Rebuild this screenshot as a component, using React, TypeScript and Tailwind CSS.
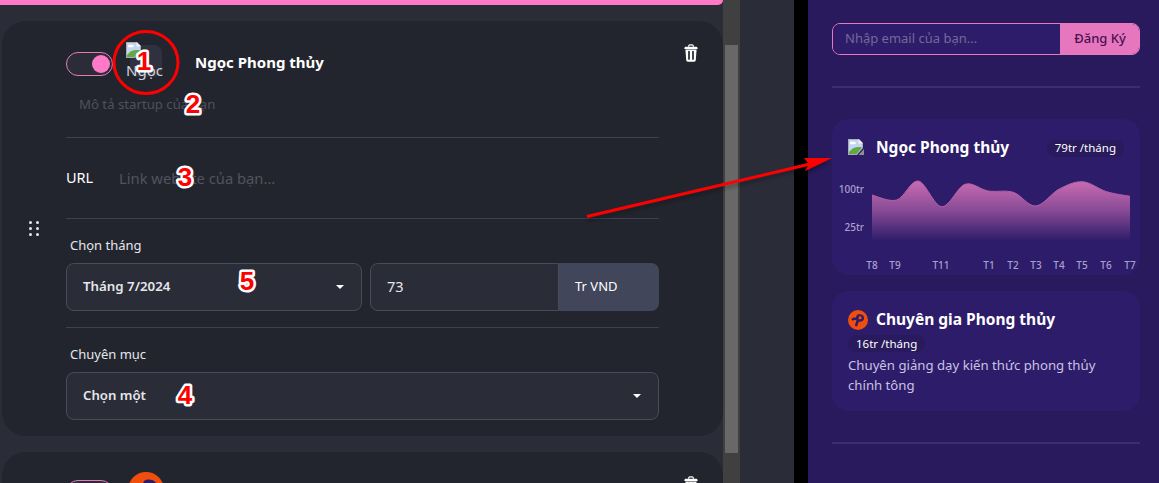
import React from "react"

const TrashIcon = ({ className }: { className?: string }) => (
  <svg viewBox="0 0 14 18" className={className} fill="none">
    <path d="M4.600 2.800V2a1.400 1.400 0 0 1 1.400-1.200h2A1.400 1.400 0 0 1 9.400 2v.8" stroke="white" strokeWidth="1.200" />
    <path d="M.4 4.200c0-.9.6-1.500 1.500-1.500h10.200c.9 0 1.500.6 1.500 1.500v.8H.4z" fill="white" />
    <path d="M1.400 5.400h11.200L11.800 16c-.1 1-.7 1.700-1.600 1.700H3.800c-.9 0-1.500-.7-1.600-1.700z" fill="white" />
    <path d="M5 7.500v7.500M9 7.500v7.500" stroke="#23252e" strokeWidth="1.700" strokeLinecap="round" />
  </svg>
)

const BrokenImage = ({ className }: { className?: string }) => (
  <svg viewBox="0 0 16 16" className={className}>
    <path d="M0 0h11l4 4v5l-6 7H0z" fill="#a9adb3" />
    <path d="M1 1h9.500L14 4.500V9l-5.500 6H1z" fill="#c5d6f2" />
    <path d="M2 3.500c1-1.300 3-1.300 4-.5 1 0 2 .5 2 1.500-2 1-4 1-6 .5z" fill="#ffffff" />
    <path d="M1 14.500V13c3-4 8-6 13-4.500L8.500 15H1z" fill="#62a845" />
    <path d="M10.500 0v4.500H15z" fill="#eef1f5" />
    <path d="M16 10v6h-5.500z" fill="#8b8f96" />
  </svg>
)

const Logo = ({ className }: { className?: string }) => (
  <svg viewBox="0 0 20 20" className={className}>
    <circle cx="10" cy="10" r="10" fill="#f04e0c" />
    <path
      d="M3.500 9.500c.6-1.800 2.400-2.300 4.300-1.800l.9-2.200c.3-.8 1.200-1.300 2.100-1.300 2.600-.2 5.100.9 5.300 3.500.2 2.700-2.600 4.500-5.300 4.100L9.400 15.500c-.3 1-1.400 1.300-2 .6-.5-.5-.4-1.200-.1-2l1.200-3.800c-1.800-.8-3.300 0-4.200.2-.5-.1-.9-.4-.8-1z"
      fill="#2d1c69"
    />
    <path d="M11 6.400c1.500-.4 2.700.2 2.700 1.300 0 1.100-1.300 1.800-3.300 1.500z" fill="#f04e0c" />
  </svg>
)

const Caret = () => (
  <span className="w-0 h-0 border-x-[4px] border-x-transparent border-t-[4px] border-t-white" />
)

const Toggle = () => (
  <div className="flex items-center justify-end w-[47px] h-[24px] rounded-full border border-[#e879c0] bg-[#2a2c38] pr-[2px]">
    <span className="w-[18px] h-[18px] rounded-full bg-[#ff7ac6]" />
  </div>
)

const DragHandle = () => (
  <div className="grid grid-cols-2 gap-x-[5px] gap-y-[3px] w-[10px]">
    {[0, 1, 2, 3, 4, 5].map((i) => (
      <span key={i} className="w-[3px] h-[3px] rounded-full bg-[#e5e7eb]" />
    ))}
  </div>
)

const Badge = ({ children }: { children: React.ReactNode }) => (
  <span className="inline-flex items-center h-[17px] px-2 rounded-full bg-[#281a5c] text-white text-[11.500px] leading-none">
    {children}
  </span>
)

const series = [
  [872, 195], [896.7, 200], [918.3, 181], [941.7, 206.7], [965, 184.3], [988.3, 191],
  [1013.3, 192.3], [1035.7, 206], [1059.3, 189], [1082.7, 181.7], [1106.7, 191.7], [1130, 196.3],
]

// catmull-rom through the points
function smoothLine(p: number[][]) {
  let d = `M${p[0][0]} ${p[0][1]}`
  for (let i = 0; i < p.length - 1; i++) {
    const a = p[i - 1] || p[i]
    const b = p[i]
    const c = p[i + 1]
    const e = p[i + 2] || c
    d += ` C${b[0] + (c[0] - a[0]) / 6} ${b[1] + (c[1] - a[1]) / 6} ${c[0] - (e[0] - b[0]) / 6} ${c[1] - (e[1] - b[1]) / 6} ${c[0]} ${c[1]}`
  }
  return d
}

const months = [
  ["T8", 872], ["T9", 895], ["T11", 941], ["T1", 989], ["T2", 1013],
  ["T3", 1036], ["T4", 1059], ["T5", 1082], ["T6", 1106], ["T7", 1130],
] as const

// viewBox follows the page coordinates of the chart area
const Chart = () => {
  const line = smoothLine(series)
  return (
    <svg viewBox="832 170 308 105" className="w-[308px] h-[105px]">
      <defs>
        <linearGradient id="area" gradientUnits="userSpaceOnUse" x1="0" y1="180" x2="0" y2="241">
          <stop offset="0%" stopColor="#cb6db3" />
          <stop offset="50%" stopColor="#884a96" />
          <stop offset="100%" stopColor="#2d1c69" />
        </linearGradient>
      </defs>
      <path d={`${line} L1130 242 L872 242 Z`} fill="url(#area)" />
      <path d={line} fill="none" stroke="#b55fa6" strokeWidth="1" />
      <text x="864" y="193" textAnchor="end" fontSize="10" fontWeight="500" fill="#aaa0d0">100tr</text>
      <text x="864" y="231" textAnchor="end" fontSize="10" fontWeight="500" fill="#aaa0d0">25tr</text>
      {months.map(([label, x]) => (
        <text key={label} x={x} y="269" textAnchor="middle" fontSize="10" fontWeight="500" fill="#aaa0d0">{label}</text>
      ))}
    </svg>
  )
}

const Annotations = () => (
  <svg className="absolute inset-0 pointer-events-none" width="1159" height="483">
    <defs>
      <filter id="soft" x="-10%" y="-50%" width="120%" height="200%">
        <feDropShadow dx="0" dy="3" stdDeviation="2" floodColor="#000" floodOpacity="0.35" />
      </filter>
    </defs>
    <ellipse cx="146" cy="62.500" rx="32" ry="31" fill="none" stroke="#f00" strokeWidth="3" />
    <g filter="url(#soft)">
      <path d="M587 216.500L810 164" stroke="#f00" strokeWidth="3" />
      <path d="M832 158L805 171L809 164L804 158Z" fill="#f00" />
    </g>
    {[
      ["1", 144, 70],
      ["2", 193, 113],
      ["3", 185, 186],
      ["5", 247, 290],
      ["4", 185, 404],
    ].map(([n, x, y]) => (
      <text
        key={n}
        x={x}
        y={y}
        textAnchor="middle"
        fontSize="26"
        fontWeight="700"
        fill="#f00"
        stroke="#fff"
        strokeWidth="5"
        strokeLinejoin="round"
        paintOrder="stroke"
        style={{ fontFamily: '"Liberation Sans", sans-serif' }}
      >
        {n}
      </text>
    ))}
  </svg>
)

export default function App() {
  return (
    <div className="relative flex w-[1159px] h-[483px] overflow-hidden bg-black font-['Noto_Sans',sans-serif]">
      {/* form column */}
      <div className="w-[723px] shrink-0 bg-[#2a2c38] overflow-hidden">
        <div className="h-[5px] rounded-br-lg bg-[#ff7ac6]" />
        <div className="flex flex-col gap-4 mt-4 ml-[2px]">
          <section className="flex items-center h-[415px] rounded-3xl bg-[#23252e]">
            <div className="flex justify-center w-[64px] shrink-0 pr-[1px]">
              <DragHandle />
            </div>
            <div className="flex flex-col flex-1 min-w-0 h-full">
              <div className="flex items-start h-[117px] border-b border-[#3f404f]">
                <div className="flex-1">
                  <div className="flex items-center mt-6">
                    <div className="mt-[5px]">
                      <Toggle />
                    </div>
                    <div className="relative w-[32px] h-[32px] ml-[17px] rounded-lg bg-[#2f3140]">
                      <BrokenImage className="absolute -left-[4px] -top-[3px] w-[16px] h-[16px]" />
                      <span className="absolute -left-[4px] top-[15px] text-[15px] text-[#d1d5db] leading-5">Ngọc</span>
                    </div>
                    <h2 className="ml-[33px] text-[15px] font-bold text-white mt-[2px]">Ngọc Phong thủy</h2>
                  </div>
                  <p className="mt-[17px] pl-[13px] text-[13.200px] leading-5 text-[#4f505e]">Mô tả startup của bạn</p>
                </div>
              </div>
              <div className="flex items-center h-[81px] border-b border-[#3f404f]">
                <span className="w-[53px] text-[14.500px] text-white">URL</span>
                <span className="text-[14.750px] text-[#52535f]">Link website của bạn...</span>
              </div>
              <div className="pt-[16px] h-[109px] border-b border-[#3f404f]">
                <label className="block pl-1 text-[13px] leading-5 text-[#e5e7eb]">Chọn tháng</label>
                <div className="flex gap-2 mt-2">
                  <div className="flex items-center justify-between w-[296px] h-[48px] pl-4 pr-[17px] rounded-lg border border-[#494b58] bg-[#2a2c38]">
                    <span className="text-[13.300px] font-semibold text-[#e5e7eb]">Tháng 7/2024</span>
                    <Caret />
                  </div>
                  <div className="flex flex-1 h-[48px]">
                    <div className="flex items-center flex-1 pl-4 rounded-l-lg border border-[#494b58] bg-[#2a2c38] text-[14.500px] text-[#e5e7eb]">73</div>
                    <div className="flex items-center w-[100px] pl-4 rounded-r-lg bg-[#41465a] text-[13px] text-white">Tr VND</div>
                  </div>
                </div>
              </div>
              <div className="pt-[16px]">
                <label className="block pl-1 text-[13px] leading-5 text-[#e5e7eb]">Chuyên mục</label>
                <div className="flex items-center justify-between h-[48px] mt-2 pl-4 pr-[17px] rounded-lg border border-[#494b58] bg-[#2a2c38]">
                  <span className="text-[13.200px] font-semibold text-[#e5e7eb]">Chọn một</span>
                  <Caret />
                </div>
              </div>
            </div>
            <div className="self-start w-[64px] shrink-0 pt-[23px] pl-[25px]">
              <TrashIcon className="w-[14px] h-[18px]" />
            </div>
          </section>
          <section className="flex h-[120px] rounded-3xl bg-[#23252e]">
            <div className="w-[64px] shrink-0" />
            <div className="flex flex-1 items-start pt-[20px]">
              <div className="mt-[8px]">
                <Toggle />
              </div>
              <Logo className="ml-[15px] w-[36px] h-[36px]" />
            </div>
            <div className="w-[64px] shrink-0 pt-[24px] pl-[25px]">
              <TrashIcon className="w-[14px] h-[18px]" />
            </div>
          </section>
        </div>
      </div>

      {/* scrollbar */}
      <div className="w-[17px] shrink-0 pl-[2px] pr-[2px] pt-[45px] bg-[#404040]">
        <div className="h-[408px] bg-[#686868]" />
      </div>
      <div className="w-[54px] shrink-0 bg-[#2a2c38]" />
      <div className="w-[14px] shrink-0 bg-black" />

      {/* preview column */}
      <aside className="flex-1 px-[24px] pt-[23px] pr-[19px] bg-[#281a5c]">
        <div className="flex h-[32px] rounded-lg border border-[#e879c0] overflow-hidden">
          <span className="flex items-center flex-1 pl-3 text-[13px] text-[#74699a] bg-[#2d1c69]">Nhập email của bạn...</span>
          <span className="flex items-center justify-center w-[80px] -my-px -mr-px bg-[#e677bf] text-[13px] font-medium text-[#4a1050]">Đăng Ký</span>
        </div>
        <div className="h-[2px] mt-[31px] bg-[#3c2d6e]" />
        <div className="h-[156px] mt-[31px] rounded-2xl bg-[#2d1c69]">
          <div className="flex items-center justify-between h-[51px] pt-[7px] pl-4 pr-4">
            <div className="flex items-center">
              <BrokenImage className="w-[16px] h-[16px] -mt-[3px]" />
              <h3 className="ml-3 text-[15.500px] font-bold text-white">Ngọc Phong thủy</h3>
            </div>
            <Badge>79tr /tháng</Badge>
          </div>
          <Chart />
        </div>
        <div className="h-[120px] mt-4 pt-[16px] px-4 rounded-2xl bg-[#2d1c69]">
          <div className="flex items-center h-[26px]">
            <Logo className="w-[20px] h-[20px]" />
            <h3 className="ml-2 text-[15.500px] font-bold text-white">Chuyên gia Phong thủy</h3>
          </div>
          <div className="mt-[2px] h-[17px] flex">
            <Badge>16tr /tháng</Badge>
          </div>
          <p className="mt-[3px] text-[13.200px] leading-5 text-[#c9c2e4]">Chuyên giảng dạy kiến thức phong thủy chính tông</p>
        </div>
        <div className="h-[2px] mt-[31px] bg-[#3c2d6e]" />
      </aside>

      <Annotations />
    </div>
  )
}
